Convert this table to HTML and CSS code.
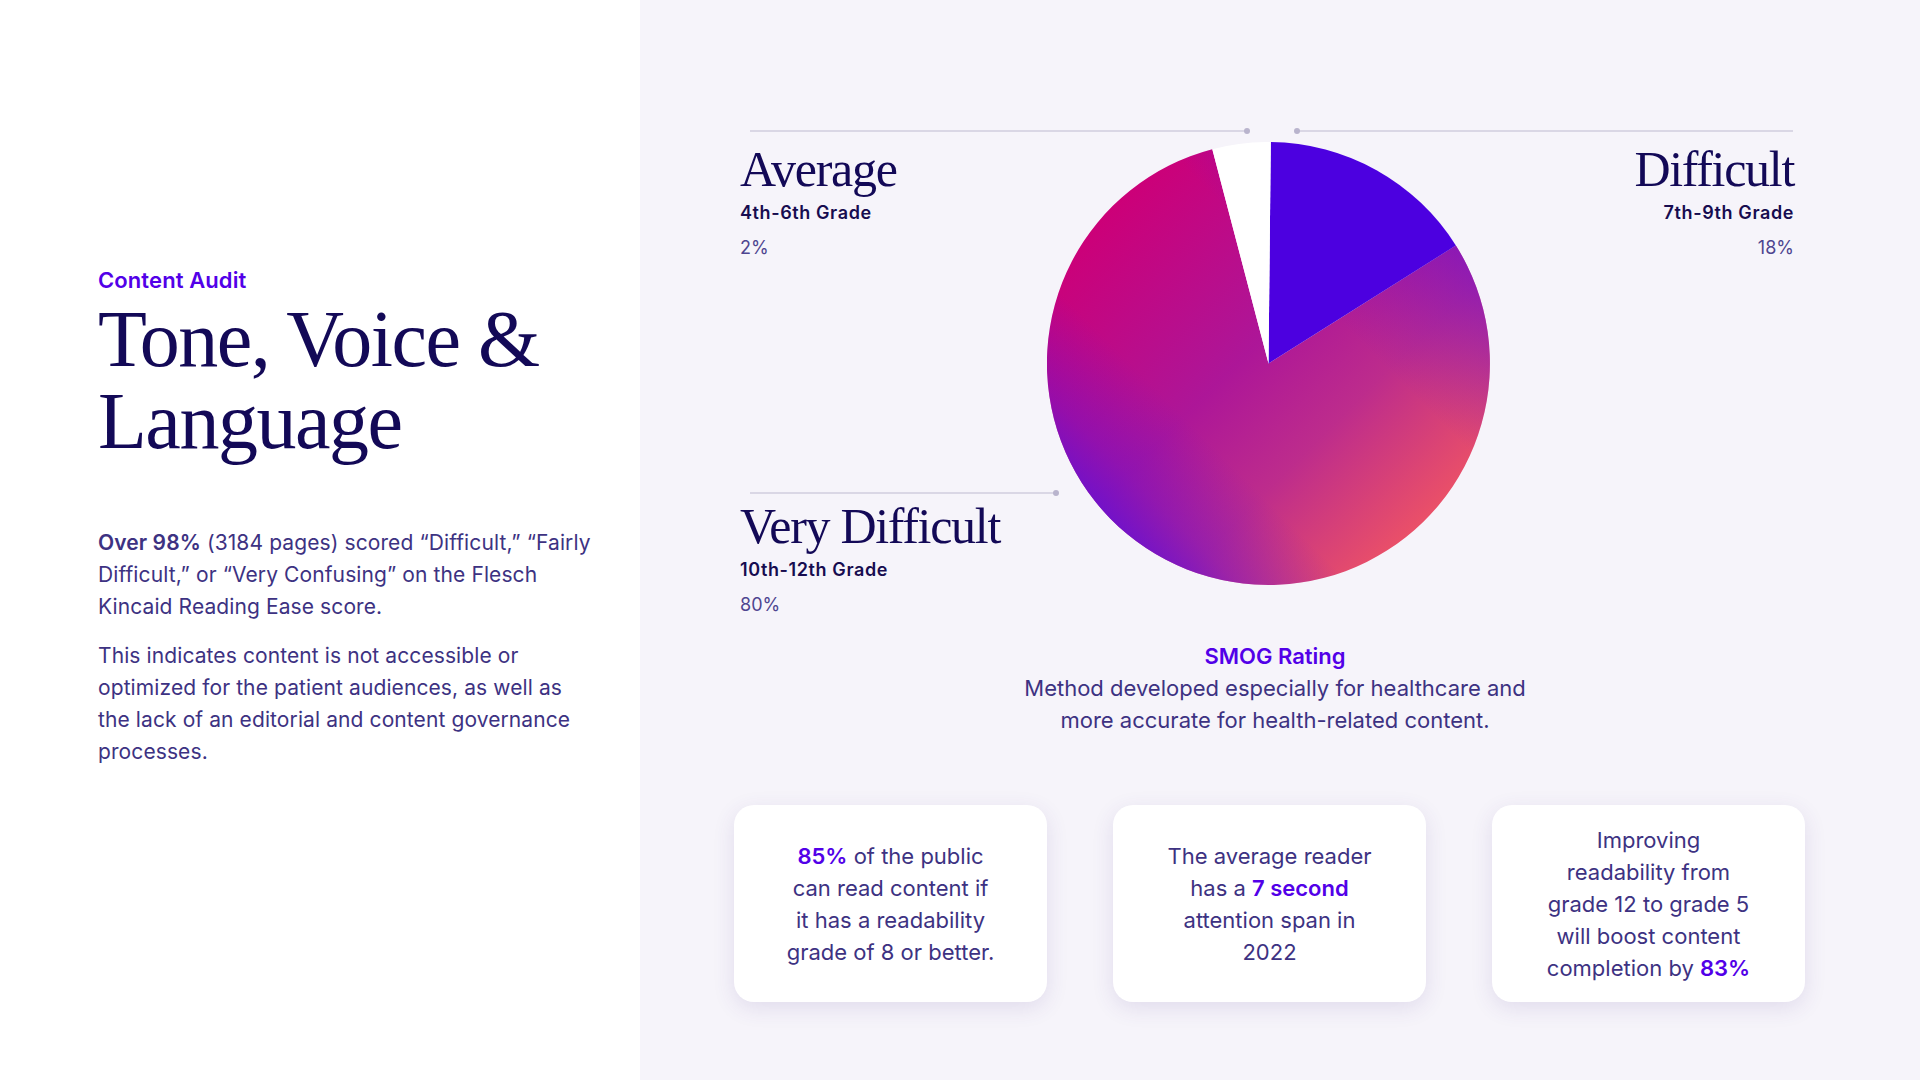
FILE: index.html
```html
<!DOCTYPE html>
<html lang="en">
<head>
<meta charset="utf-8">
<title>Tone, Voice &amp; Language</title>
<link rel="stylesheet" href="styles.css">
</head>
<body>
<div class="page">
  <section class="intro">
    <p class="eyebrow">Content Audit</p>
    <h1 class="title">Tone, Voice &amp; Language</h1>
    <p class="body"><strong>Over 98%</strong> (3184 pages) scored “Difficult,” “Fairly Difficult,” or “Very Confusing” on the Flesch Kincaid Reading Ease score.</p>
    <p class="body">This indicates content is not accessible or optimized for the patient audiences, as well as the lack of an editorial and content governance processes.</p>
  </section>

  <section class="insights">
    <div class="chart">
      <span class="leader leader-avg"></span>
      <span class="leader leader-diff"></span>
      <span class="leader leader-vd"></span>

      <div class="col-left">
        <div class="label label-avg">
          <div class="label-name">Average</div>
          <div class="label-grade">4th-6th Grade</div>
          <div class="label-pct">2%</div>
        </div>
        <div class="label label-vd">
          <div class="label-name">Very Difficult</div>
          <div class="label-grade">10th-12th Grade</div>
          <div class="label-pct">80%</div>
        </div>
      </div>

      <div class="col-pie">
        <svg class="pie" width="443" height="443" viewBox="0 0 443 443" aria-hidden="true">
          <defs>
            <linearGradient id="gMain" gradientUnits="userSpaceOnUse" x1="65" y1="65" x2="378" y2="378">
              <stop offset="0" stop-color="#cc0078"/>
              <stop offset="0.45" stop-color="#ad1698"/>
              <stop offset="0.7" stop-color="#bd2c8c"/>
              <stop offset="1" stop-color="#ea5068"/>
            </linearGradient>
            <linearGradient id="gOver" gradientUnits="userSpaceOnUse" x1="65" y1="378" x2="378" y2="65">
              <stop offset="0" stop-color="#6410d4" stop-opacity="0.8"/>
              <stop offset="0.1" stop-color="#6a10d0" stop-opacity="0.45"/>
              <stop offset="0.28" stop-color="#7010c8" stop-opacity="0"/>
              <stop offset="0.68" stop-color="#7010c8" stop-opacity="0"/>
              <stop offset="1" stop-color="#6c10d0" stop-opacity="0.6"/>
            </linearGradient>
          </defs>
          <path d="M221.5 221.5 L408.9 103.5 A221.5 221.5 0 1 1 165.3 7.2 Z" fill="url(#gMain)"/>
          <path d="M221.5 221.5 L408.9 103.5 A221.5 221.5 0 1 1 165.3 7.2 Z" fill="url(#gOver)"/>
          <path d="M221.5 221.5 L223.8 0 A221.5 221.5 0 0 1 408.9 103.5 Z" fill="#4c00e0"/>
          <path d="M221.5 221.5 L165.3 7.2 A221.5 221.5 0 0 1 223.8 0 Z" fill="#ffffff"/>
        </svg>
      </div>

      <div class="col-right">
        <div class="label label-diff">
          <div class="label-name">Difficult</div>
          <div class="label-grade">7th-9th Grade</div>
          <div class="label-pct">18%</div>
        </div>
      </div>
    </div>

    <div class="smog">
      <p class="smog-title">SMOG Rating</p>
      <p class="smog-text">Method developed especially for healthcare and<br>more accurate for health-related content.</p>
    </div>

    <div class="cards">
      <div class="card"><p><strong>85%</strong> of the public can read content if it has a readability grade of 8 or better.</p></div>
      <div class="card"><p>The average reader has a <strong>7 second</strong> attention span in 2022</p></div>
      <div class="card"><p>Improving readability from grade 12 to grade 5 will boost content completion by <strong>83%</strong></p></div>
    </div>
  </section>
</div>
</body>
</html>
```

FILE: styles.css
```css
* { box-sizing: border-box; }

body {
  margin: 0;
  font-family: Inter, "Liberation Sans", sans-serif;
  color: #3d3282;
}

.page {
  display: grid;
  grid-template-columns: 640px 1fr;
  width: 1920px;
  height: 1080px;
  overflow: hidden;
}

/* ---------- left intro ---------- */
.intro {
  background: #ffffff;
  padding: 266px 40px 0 98px;
}

.eyebrow {
  margin: 0;
  font-size: 22px;
  line-height: 28px;
  font-weight: 600;
  letter-spacing: 0.1px;
  color: #5200e8;
}

.title {
  margin: 4px 0 0;
  font-family: "Liberation Serif", serif;
  font-weight: 400;
  font-size: 80px;
  line-height: 82px;
  letter-spacing: -1.5px;
  color: #130957;
}

.body {
  margin: 65px 0 0;
  max-width: 496px;
  font-size: 21px;
  line-height: 32px;
  letter-spacing: 0.1px;
  color: #3d3282;
}

.body + .body { margin-top: 17px; }

.body strong { font-weight: 600; }

/* ---------- right insights ---------- */
.insights {
  background: #f6f4fa;
  padding: 130px 0 0 94px;
}

.chart {
  position: relative;
  width: 1054px;
  margin-left: 6px;
  display: grid;
  grid-template-columns: 307px 443px 304px;
}

.leader {
  position: absolute;
  height: 2px;
  background: #dad7e5;
}

.leader::after {
  content: "";
  position: absolute;
  top: -2px;
  width: 6px;
  height: 6px;
  border-radius: 50%;
  background: #b9b4cd;
}

.leader-avg { left: 10px; top: 0; width: 497px; }
.leader-avg::after { right: -3px; }

.leader-diff { left: 557px; top: 0; width: 496px; }
.leader-diff::after { left: -3px; }

.leader-vd { left: 10px; top: 362px; width: 306px; }
.leader-vd::after { right: -3px; }

.label-avg { margin-top: 14px; }
.label-vd { margin-top: 241px; }
.label-diff { margin-top: 14px; text-align: right; }

.label-name {
  font-family: "Liberation Serif", serif;
  font-size: 50px;
  line-height: 50px;
  letter-spacing: -1.3px;
  color: #130957;
}

.label-grade {
  margin-top: 7px;
  font-size: 18px;
  line-height: 24px;
  font-weight: 600;
  letter-spacing: 0.6px;
  color: #170c50;
}

.label-pct {
  margin-top: 11px;
  font-size: 18px;
  line-height: 24px;
  color: #4e4590;
}

.col-pie { padding-top: 12px; }

.pie { display: block; }

.smog {
  width: 1071px;
  margin-top: 23px;
  padding-left: 11px;
  text-align: center;
}

.smog p { margin: 0; }

.smog-title {
  font-size: 22px;
  line-height: 32px;
  font-weight: 600;
  color: #5200e8;
}

.smog-text {
  font-size: 22px;
  line-height: 32px;
  color: #3d3282;
}

.cards {
  margin-top: 69px;
  width: 1071px;
  display: grid;
  grid-template-columns: repeat(3, 313px);
  column-gap: 66px;
}

.card {
  height: 197px;
  padding: 0 52px;
  display: flex;
  align-items: center;
  justify-content: center;
  text-align: center;
  background: #ffffff;
  border-radius: 20px;
  box-shadow: 0 6px 22px rgba(70, 50, 140, 0.12);
  font-size: 22px;
  line-height: 32px;
  color: #3d3282;
}

.card p { margin: 0; }

.card strong {
  font-weight: 600;
  color: #5200e8;
}
```
